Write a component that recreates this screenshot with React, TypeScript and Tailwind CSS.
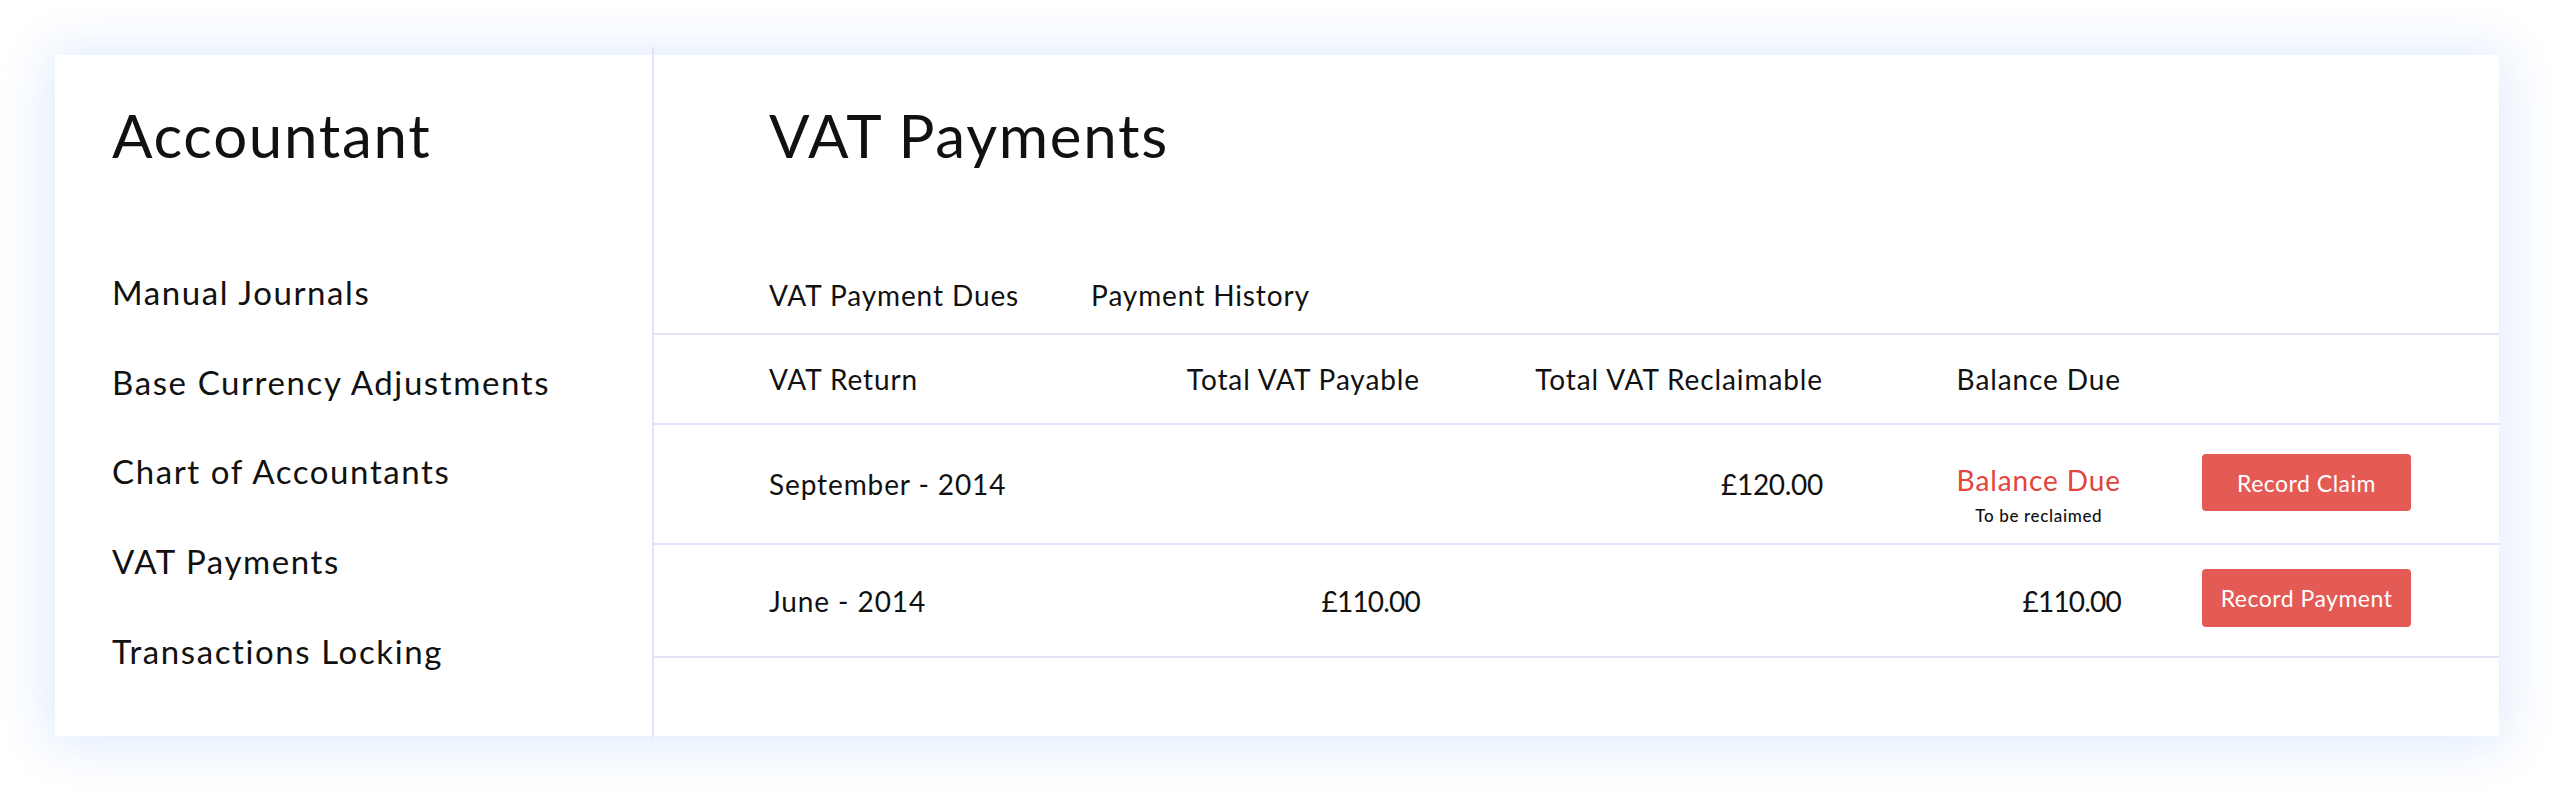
import React from "react";

const navItems = [
  "Manual Journals",
  "Base Currency Adjustments",
  "Chart of Accountants",
  "VAT Payments",
  "Transactions Locking",
];

export default function App() {
  return (
    <div
      className="min-h-[791px] w-full bg-white p-[55px] text-[#111111]"
      style={{ fontFamily: "Lato, 'Open Sans', 'Liberation Sans', sans-serif" }}
    >
      <div className="flex h-[681px] w-[2444px] bg-white shadow-[0_2px_50px_8px_rgba(214,230,252,0.75)]">
        {/* Sidebar */}
        <aside className="w-[597px] shrink-0 pl-[57px] pt-[44px]">
          <h1 className="text-[60px] leading-[72px] font-normal tracking-[1.7px]">Accountant</h1>
          <nav className="mt-[77px] flex flex-col">
            {navItems.map((item) => (
              <div key={item} className="text-[33px] leading-[89.7px] tracking-[1.6px]">
                {item}
              </div>
            ))}
          </nav>
        </aside>

        {/* Divider */}
        <div className="-mt-2 -mb-[2px] w-[2px] shrink-0 bg-[#e2e2f8]" />

        {/* Main */}
        <main className="flex flex-1 flex-col pt-[44px]">
          <h2 className="pl-[115px] text-[60px] leading-[72px] font-normal tracking-[1.7px]">VAT Payments</h2>

          <div className="mt-[107px] flex gap-[72px] border-b-2 border-[#e2e2f8] pb-[21px] pl-[115px] text-[28px] leading-[34px] tracking-[0.9px]">
            <span>VAT Payment Dues</span>
            <span>Payment History</span>
          </div>

          {/* Header row */}
          <div className="grid h-[90px] grid-cols-[400px_251px_403px_298px_1fr] items-center border-b-2 border-[#e2e2f8] pl-[115px] text-[28px] leading-[34px] tracking-[0.9px]">
            <span>VAT Return</span>
            <span className="justify-self-end">Total VAT Payable</span>
            <span className="justify-self-end">Total VAT Reclaimable</span>
            <span className="justify-self-end">Balance Due</span>
            <span />
          </div>

          {/* Row 1 */}
          <div className="grid h-[120px] grid-cols-[400px_251px_403px_298px_1fr] items-center border-b-2 border-[#e2e2f8] pl-[115px] text-[28px] leading-[34px] tracking-[0.9px]">
            <span>September - 2014</span>
            <span />
            <span className="justify-self-end tracking-[-0.3px]">£120.00</span>
            <div className="flex flex-col items-center justify-self-end pt-[20px]">
              <span className="text-[#e3443b]">Balance Due</span>
              <span className="mt-[9px] text-[17px] leading-[20px] font-medium tracking-[0.65px]">To be reclaimed</span>
            </div>
            <div className="mb-[3px] pl-[81px]">
              <button className="h-[57px] w-[209px] rounded-[4px] bg-[#e35b54] text-[23px] tracking-[0.5px] text-white">
                Record Claim
              </button>
            </div>
          </div>

          {/* Row 2 */}
          <div className="grid h-[113px] grid-cols-[400px_251px_403px_298px_1fr] items-center border-b-2 border-[#e2e2f8] pl-[115px] text-[28px] leading-[34px] tracking-[0.9px]">
            <span>June - 2014</span>
            <span className="justify-self-end tracking-[-0.8px]">£110.00</span>
            <span />
            <span className="justify-self-end tracking-[-0.8px]">£110.00</span>
            <div className="mb-[5px] pl-[81px]">
              <button className="h-[58px] w-[209px] rounded-[4px] bg-[#e35b54] text-[23px] tracking-[0.5px] text-white">
                Record Payment
              </button>
            </div>
          </div>
        </main>
      </div>
    </div>
  );
}
